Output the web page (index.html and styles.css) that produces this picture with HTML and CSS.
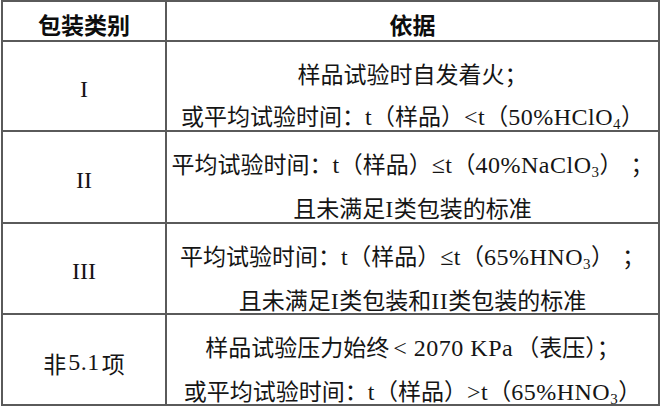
FILE: index.html
```html
<!DOCTYPE html>
<html lang="zh-CN">
<head>
<meta charset="utf-8">
<title>包装类别</title>
<link rel="stylesheet" href="styles.css">
</head>
<body>
<div class="grid">
  <div class="cell head">包装类别</div>
  <div class="cell head">依据</div>

  <div class="cell cat"><span class="roman">I</span></div>
  <div class="cell basis">
    <div class="line">样品试验时自发着火；</div>
    <div class="line">或平均试验时间：<span class="lat">t</span>（样品）<span class="lat">&lt;t</span>（<span class="lat">50%HClO<sub class="sub">4</sub></span>）</div>
  </div>

  <div class="cell cat"><span class="roman">II</span></div>
  <div class="cell basis">
    <div class="line">平均试验时间：<span class="lat">t</span>（样品）<span class="lat">≤t</span>（<span class="lat">40%NaClO<sub class="sub">3</sub></span>）<span class="gap"></span>；</div>
    <div class="line">且未满足<span class="lat">I</span>类包装的标准</div>
  </div>

  <div class="cell cat"><span class="roman">III</span></div>
  <div class="cell basis">
    <div class="line">平均试验时间：<span class="lat">t</span>（样品）<span class="lat">≤t</span>（<span class="lat">65%HNO<sub class="sub">3</sub></span>）<span class="gap"></span>；</div>
    <div class="line">且未满足<span class="lat">I</span>类包装和<span class="lat">II</span>类包装的标准</div>
  </div>

  <div class="cell cat">非<span class="lat num">5.1</span>项</div>
  <div class="cell basis">
    <div class="line">样品试验压力始终<span class="lat lt">&lt; 2070 KPa</span>（表压）；</div>
    <div class="line">或平均试验时间：<span class="lat">t</span>（样品）<span class="lat">&gt;t</span>（<span class="lat">65%HNO<sub class="sub">3</sub></span>）</div>
  </div>
</div>
</body>
</html>
```

FILE: styles.css
```css
html, body {
  margin: 0;
  padding: 0;
  background: #ffffff;
}

body {
  padding-left: 1px;
  font-family: "Noto Sans CJK SC", sans-serif;
  font-size: 23px;
  color: #151515;
}

.grid {
  display: grid;
  width: 659px;
  box-sizing: border-box;
  grid-template-columns: 164px 1fr;
  grid-template-rows: 40px 90px 92px 91px 91px;
  border-top: 2px solid #5a5a5a;
  border-left: 2px solid #5a5a5a;
}

.cell {
  border-right: 2px solid #5a5a5a;
  border-bottom: 2px solid #5a5a5a;
  text-align: center;
  white-space: nowrap;
  overflow: visible;
  min-height: 0;
}

.head {
  font-weight: 700;
  font-size: 23px;
  line-height: 40px;
  padding-top: 2px;
  color: #0d0d0d;
}

.cat {
  display: flex;
  align-items: center;
  justify-content: center;
  padding-top: 6px;
}

.roman {
  font-family: "Liberation Serif", serif;
  font-size: 24px;
}

.basis {
  padding-top: 10px;
}

.line {
  line-height: 42px;
}

.lat {
  font-family: "Liberation Serif", serif;
  font-size: 24px;
  letter-spacing: 0.5px;
}

.num {
  margin: 0 2px;
}

.lt {
  margin: 0 3px 0 4px;
}

.gap {
  display: inline-block;
  width: 8px;
}

.sub {
  font-size: 15px;
  vertical-align: -4px;
  line-height: 0;
}
```
